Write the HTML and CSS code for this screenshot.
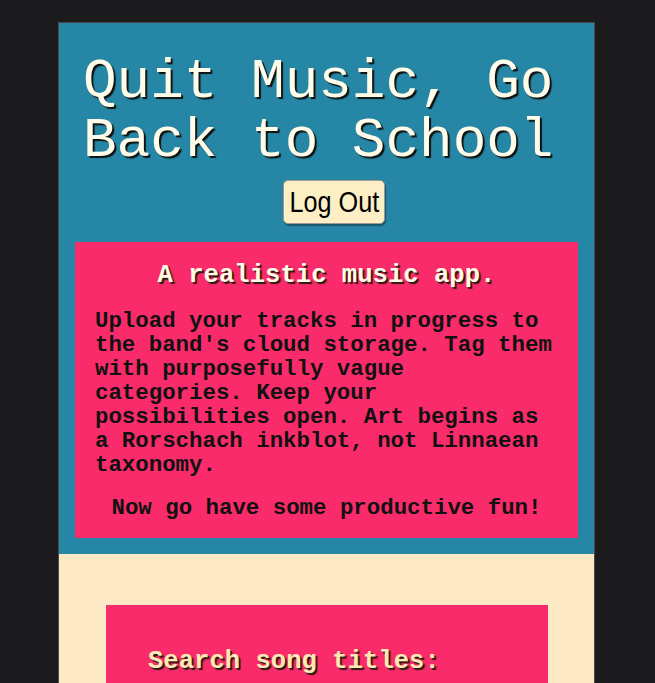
FILE: index.html
```html
<!DOCTYPE html>
<html lang="en">
<head>
<meta charset="utf-8">
<title>Quit Music, Go Back to School</title>
<link rel="stylesheet" href="styles.css">
</head>
<body>
<div class="page">
  <header class="hero">
    <h1 class="title">Quit Music, Go Back to School</h1>
    <button class="logout" type="button"><span class="logout-label">Log Out</span></button>
    <section class="intro">
      <h2 class="intro-heading">A realistic music app.</h2>
      <p class="intro-text">Upload your tracks in progress to the band's cloud storage. Tag them with purposefully vague categories. Keep your possibilities open. Art begins as a Rorschach inkblot, not Linnaean taxonomy.</p>
      <p class="intro-cta">Now go have some productive fun!</p>
    </section>
  </header>
  <main class="content">
    <div class="search-card">
      <label class="search-label" for="search">Search song titles:</label>
    </div>
  </main>
</div>
</body>
</html>
```
FILE: styles.css
```css
html, body {
  margin: 0;
  padding: 0;
  background: #1b1b1d;
  overflow: hidden;
}
body {
  font-family: "Liberation Mono", "DejaVu Sans Mono", monospace;
}
.page {
  width: 535px;
  margin: 22px 0 0 58px;
  border: 1px solid #4a4a4c;
  border-bottom: none;
}
.hero {
  background: #2587a5;
  padding: 30px 16px 16px;
  display: flex;
  flex-direction: column;
}
.title {
  margin: 0 0 9px;
  padding-left: 8px;
  font-size: 56px;
  font-weight: normal;
  line-height: 59px;
  color: #fffdea;
  text-shadow: 2px 2px 1px #111;
}
.logout {
  align-self: flex-start;
  width: 102px;
  height: 44px;
  margin: 0 0 18px 208px;
  padding: 0;
  display: flex;
  align-items: center;
  justify-content: center;
  font-family: "Liberation Sans", Arial, sans-serif;
  font-size: 30px;
  line-height: 34px;
  color: #000;
  background: #fcefc6;
  border: 1px solid #9c9a92;
  border-radius: 5px;
  box-shadow: 1px 2px 1px rgba(0, 0, 0, 0.35);
  overflow: visible;
}
.logout-label {
  display: inline-block;
  white-space: nowrap;
  transform: scaleX(0.84);
}
.intro {
  background: #f92b6a;
  padding: 19px 20px 18px;
}
.intro-heading {
  margin: 0 0 18px;
  text-align: center;
  font-size: 25.6px;
  line-height: 30px;
  font-weight: bold;
  color: #fffbe6;
  text-shadow: 2px 2px 1px #2a1a10;
}
.intro-text {
  margin: 0;
  font-size: 22.4px;
  line-height: 24px;
  font-weight: bold;
  color: #111;
}
.intro-cta {
  margin: 19px 0 0;
  text-align: center;
  font-size: 22.4px;
  line-height: 24px;
  font-weight: bold;
  color: #111;
}
.content {
  background: #fde9c6;
  padding: 51px 46px 0 47px;
  height: 200px;
}
.search-card {
  background: #f92b6a;
  padding: 42px 42px 40px;
  height: 200px;
}
.search-label {
  font-size: 25.6px;
  line-height: 30px;
  font-weight: bold;
  color: #fde9b6;
  text-shadow: 2px 2px 1px #2a1a10;
}
```
